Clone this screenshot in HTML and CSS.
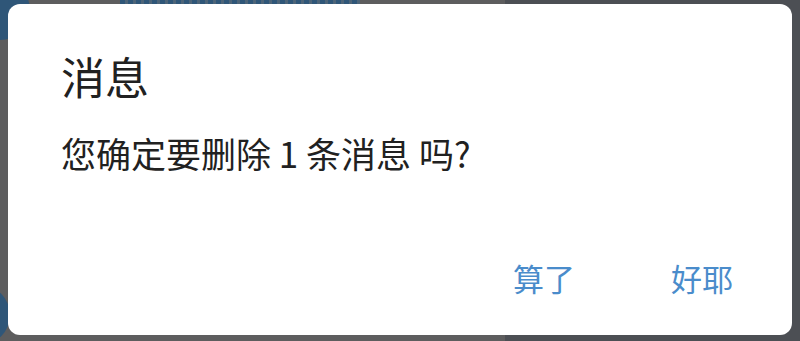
FILE: index.html
```html
<!DOCTYPE html>
<html lang="zh-CN">

<head>
	<meta charset="UTF-8">
	<meta name="viewport" content="width=device-width, initial-scale=1.0">
	<title>消息</title>
	<link rel="stylesheet" href="styles.css">
</head>

<body>
	<div class="screen">
		<!-- dimmed app behind the dialog -->
		<div class="backdrop">
			<span class="avatar"></span>
			<span class="bg-title"></span>
			<span class="panel-right"></span>
			<span class="avatar avatar-low"></span>
		</div>

		<div class="dialog">
			<div class="dialog-title">消息</div>
			<div class="dialog-body">您确定要删除 1 条消息 吗?</div>
			<div class="dialog-actions">
				<a class="dialog-button">算了</a>
				<a class="dialog-button">好耶</a>
			</div>
		</div>
	</div>
</body>

</html>
```

FILE: styles.css
```css
html,
body {
	margin: 0;
	height: 100%;
}

body {
	background-color: #5d5d5e;
	font-family: "Noto Sans CJK SC", "Noto Sans", sans-serif;
	overflow: hidden;
}

.screen {
	position: relative;
	height: 100%;
	box-sizing: border-box;
	padding: 4px 8px 6px 8px;
	display: flex;
}

/* faded things of the page under the dialog */
.backdrop {
	position: absolute;
	inset: 0;
	overflow: hidden;
}

.panel-right {
	position: absolute;
	top: 0;
	bottom: 0;
	left: 505px;
	right: 0;
	background-color: #4c4f54;
}

.avatar {
	position: absolute;
	left: -30px;
	top: -20px;
	width: 60px;
	height: 60px;
	border-radius: 50%;
	background-color: #2f5678;
}

.avatar-low {
	top: 285px;
	left: -50px;
}

/* the cut-off heading of the page behind, only its bottom edge shows */
.bg-title {
	position: absolute;
	left: 120px;
	top: 0;
	width: 240px;
	height: 4px;
	background: repeating-linear-gradient(90deg, #2f5678 0 5px, #4d6478 5px 8px);
}

.dialog {
	position: relative;
	flex: 1;
	display: flex;
	flex-direction: column;
	background-color: #ffffff;
	border-radius: 12px;
	padding: 46px 43px 29px 53px;
}

.dialog-title {
	font-size: 44px;
	line-height: 52px;
	color: #212121;
}

.dialog-body {
	margin-top: 29px;
	font-size: 35px;
	line-height: 44px;
	color: #212121;
}

.dialog-actions {
	margin-top: auto;
	display: flex;
	justify-content: flex-end;
	gap: 64px;
}

.dialog-button {
	font-size: 31px;
	line-height: 40px;
	padding: 8px 16px;
	color: #4a8ccb;
	cursor: pointer;
}
```
